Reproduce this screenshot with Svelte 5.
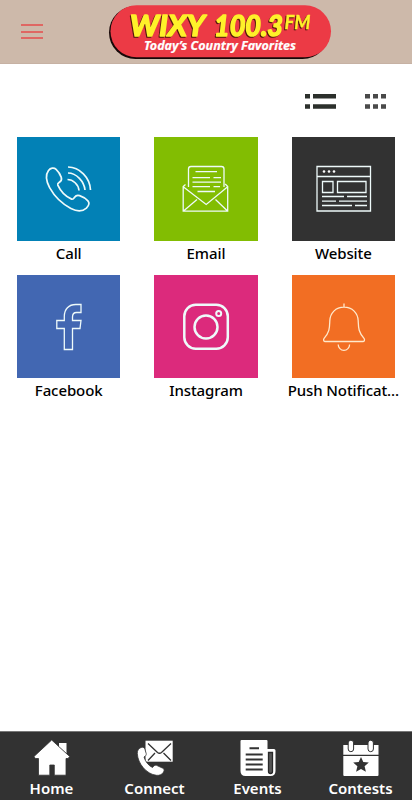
<script lang="ts">
	type Item = { id: string; label: string };

	const tiles: Item[] = [
		{ id: 'call', label: 'Call' },
		{ id: 'email', label: 'Email' },
		{ id: 'website', label: 'Website' },
		{ id: 'facebook', label: 'Facebook' },
		{ id: 'instagram', label: 'Instagram' },
		{ id: 'push', label: 'Push Notificat...' },
	];

	const tabs: Item[] = [
		{ id: 'home', label: 'Home' },
		{ id: 'connect', label: 'Connect' },
		{ id: 'events', label: 'Events' },
		{ id: 'contests', label: 'Contests' },
	];
</script>

<div class="screen">
	<header>
		<button class="menu" aria-label="Menu">
			<span></span><span></span><span></span>
		</button>
		<svg class="logo" viewBox="0 0 224 56" width="224" height="56">
			<rect x="1" y="2" width="220" height="53" rx="26.5" fill="#180808" />
			<rect x="2.5" y="1.3" width="220.5" height="52" rx="26" fill="#ec3a45" />
			<g class="name">
				<text x="22" y="31.7" textLength="75" lengthAdjust="spacingAndGlyphs">WIXY</text>
				<text x="106" y="31.7" textLength="69" lengthAdjust="spacingAndGlyphs">100.3</text>
				<text class="fm" x="176.5" y="24.5" textLength="26" lengthAdjust="spacingAndGlyphs">FM</text>
			</g>
			<text class="slogan" x="36" y="45.7" textLength="152" lengthAdjust="spacingAndGlyphs">
				Today’s Country Favorites
			</text>
		</svg>
	</header>

	<main>
		<div class="views">
			<svg width="31" height="15" fill="#2c302c" aria-label="List view">
				<path d="M0 0h5v4.5H0zM8 0h23v4.5H8zM0 10.3h5v4.5H0zM8 10.3h23v4.5H8z" />
			</svg>
			<svg width="21" height="15" fill="#4a4a4a" aria-label="Grid view">
				<path
					d="M0 0h5v4.5H0zM8 0h5v4.5H8zM16 0h5v4.5h-5zM0 10.3h5v4.5H0zM8 10.3h5v4.5H8zM16 10.3h5v4.5h-5z"
				/>
			</svg>
		</div>

		<div class="grid">
			{#each tiles as tile}
				<div class="item">
					<div class="tile {tile.id}">
						<svg viewBox="0 0 104 104" width="104" height="104">
							{#if tile.id === 'call'}
								<path
									d="M31.5 33.5c2-2.6 5.4-3.2 7.6-1.2 2.4 2.2 4.2 5.3 5.2 8.1.7 2.2-.3 3.8-2 4.9-1.5 1-2 1.5-1.5 2.8 2.7 6 8.2 11.5 13.8 14 1.4.6 2-.2 3-1.8 1.2-1.9 2.8-2.4 5-1.7 3.3 1.1 6.5 3.2 8.3 5.3 1.7 2 .9 4.9-1.5 7.2-4.3 3.9-9.4 3.5-15.5.4-8.8-4.6-16.6-12.3-21.3-20.8-3-5.7-4.4-12.7-1.1-17.2z"
								/>
								<path
									d="M51 30c11.5 0 22 10.500 22.500 23M51 36c8.500 0 16.200 8.500 17 17M50.500 42.500c5.500 0 11 5 11.500 11"
								/>
							{:else if tile.id === 'email'}
								<g class="thin">
									<path
										d="M34.5 50V32q0-2.500 2.500-2.500h30.500q2.500 0 2.500 2.500v18M31.500 47.500l-2.300 2v24.700h44.500V49.500l-2.500-2.500M29.200 49.700l23 17.800 21.500-17.800M29.500 74l13.500-11.500M73.500 74L61.500 62.500"
									/>
									<path
										d="M41.5 34.700H63M38.500 40.700H56M59.500 40.700H67M38.500 45.200H67M38.500 49.700H56M59.500 49.700H66M43.500 54.500H61"
									/>
								</g>
							{:else if tile.id === 'website'}
								<g class="thin">
									<path
										d="M25 29.500h53.500v44.500H25zM25 39.500h53.500M30.500 44.500h10.500v11h-10.500zM45.500 44.500h28.500v11H45.500z"
									/>
									<path
										d="M30 59.500h22M55 59.500h20M30 64.200h14M47 64.200h28M30 68.500h30M63 68.500h12"
									/>
								</g>
								<g class="solid">
									<circle cx="32" cy="34.500" r="1.300" />
									<circle cx="37" cy="34.500" r="1.300" />
									<circle cx="42" cy="34.500" r="1.300" />
								</g>
							{:else if tile.id === 'facebook'}
								<path
									class="thin"
									d="M47.300 74.500V53.500h-7.500v-8h7.500v-4c0-7.500 4.500-12 11.500-12h5.200v8H59.500c-3 0-4 1.500-4 4.500v3.500h8.500l-1 8h-7.500v21z"
								/>
							{:else if tile.id === 'instagram'}
								<g class="thick">
									<rect x="30.300" y="29.700" width="43.500" height="44" rx="11.500" />
									<circle cx="52" cy="52" r="11.500" />
									<circle class="lens" cx="64.700" cy="38.500" r="2.500" />
								</g>
							{:else}
								<g class="thin bell">
									<path
										d="M52 32v-3.500M52 32.200c-8.500 0-13.800 6-14.200 13.500-.3 7 .1 11-5.700 17.700-1 1.300-.5 3.100 1.200 3.100h37.500c1.700 0 2.200-1.800 1.200-3.100-5.800-6.700-5.500-10.700-5.800-17.700-.4-7.500-5.700-13.500-14.200-13.500z"
									/>
									<path d="M46.200 69.500a5.700 5.800 0 0 0 11.400 0" />
								</g>
							{/if}
						</svg>
					</div>
					<span class="label">{tile.label}</span>
				</div>
			{/each}
		</div>
	</main>

	<nav>
		{#each tabs as tab}
			<div class="tab">
				<svg viewBox="0 0 36 36" width="36" height="36" fill="#fff">
					{#if tab.id === 'home'}
						<path d="M25 3h7.500v10.500L25 7z" />
						<path
							stroke="#323232"
							stroke-width=".8"
							d="M17.700 0L0 16.500l1.300 2h3.200v16.700h11.300V25h4.500v10.200h11.700V18.500H34l1.700-2z"
						/>
					{:else if tab.id === 'connect'}
						<path d="M8.500 .7h27.200v21H8.500z" />
						<path
							fill="none"
							stroke="#323232"
							stroke-width="1.300"
							d="M11 3.500l9.500 9q2 1.500 4 0l9.500-9M11 20.500l7-7.500M34 20.500L26.500 13"
						/>
						<path
							stroke="#323232"
							stroke-width=".8"
							d="M4 7.500c2-.8 3.500.3 4 2l1.200 4c.3 1.600-.7 2.500-2.200 3.500 1.500 5 4.500 8.500 8.500 10.500 1.200-1.500 2.200-2.700 4-2.200l6 2.800c2 .9 2 2.300 1 4-1.300 2.400-4 3.600-7 3.200C9.500 34.300.7 23.500.3 13.500.2 10.500 1.500 8.500 4 7.500z"
						/>
					{:else if tab.id === 'events'}
						<path d="M1.500 0h25q1 0 1 1v8h6.500q1.500 0 1.500 1.500V31q0 5-5 5H5.500q-5 0-5-5V1q0-1 1-1z" />
						<path
							fill="none"
							stroke="#323232"
							stroke-width="2"
							d="M9.500 8.300h9.500M5.700 14.500h17M5.700 19.500h17M5.700 24.500h17M5.700 29.500h17"
						/>
						<path
							fill="#555"
							stroke="#292929"
							stroke-width="1.300"
							d="M28.500 12.500h4v19q0 2-2 2t-2-2z"
						/>
					{:else}
						<path d="M.3 5h35.200v9.700H.3zM.3 16h35.200v19q0 1-1 1H1.300q-1 0-1-1z" />
						<g stroke="#323232" stroke-width="1">
							<rect x="5.200" y=".2" width="5.400" height="11.500" rx="2.700" />
							<rect x="25" y=".2" width="5.400" height="11.500" rx="2.700" />
						</g>
						<path
							fill="#323232"
							d="M18 17l2.300 5.100 5.500.5-4.200 3.700 1.300 5.500-4.900-2.900-4.900 2.900 1.300-5.500-4.200-3.700 5.500-.5z"
						/>
					{/if}
				</svg>
				<span>{tab.label}</span>
			</div>
		{/each}
	</nav>
</div>

<style>
	:global(body) {
		background: #fff;
	}
	.screen {
		display: flex;
		flex-direction: column;
		width: 412px;
		height: 800px;
		overflow: hidden;
		font-family: 'Noto Sans', sans-serif;
	}
	header {
		box-sizing: border-box;
		display: flex;
		align-items: flex-start;
		height: 64px;
		padding: 4px 0 0 21px;
		background: #cdb9aa;
		border-bottom: 1px solid #c6b1a3;
	}
	.menu {
		display: flex;
		flex-direction: column;
		gap: 4.5px;
		width: 22px;
		margin: 20px 65px 0 0;
		padding: 0;
		border: none;
		background: none;
	}
	.menu span {
		height: 2px;
		background: #df6763;
	}
	.name {
		font-family: Lato, sans-serif;
		font-size: 29px;
		font-weight: 700;
		font-style: italic;
		fill: #fff12a;
		stroke: #fff12a;
		stroke-width: 1.6;
		stroke-linejoin: round;
		filter: drop-shadow(-0.8px 1.2px 0 #54180c);
	}
	.fm {
		font-size: 19px;
		stroke-width: 0.3;
	}
	.slogan {
		font-size: 12.5px;
		font-weight: 700;
		font-style: italic;
		fill: #fff;
		stroke: #fff;
		stroke-width: 0.2;
	}
	main {
		flex: 1;
	}
	.views {
		display: flex;
		justify-content: flex-end;
		gap: 29px;
		height: 15px;
		padding: 29.5px 26px 0 0;
	}
	.grid {
		display: grid;
		grid-template-columns: repeat(3, 1fr);
		grid-auto-rows: 137.4px;
		margin-top: 28.7px;
	}
	.item {
		display: flex;
		flex-direction: column;
		align-items: center;
	}
	.tile {
		width: 103.5px;
		height: 103.5px;
	}
	.tile.call {
		background: #0281b6;
	}
	.tile.email {
		background: #82bd02;
	}
	.tile.website {
		background: #323232;
	}
	.tile.facebook {
		background: #4267b2;
	}
	.tile.instagram {
		background: #dc2a7c;
	}
	.tile.push {
		background: #f26e23;
	}
	.tile svg {
		display: block;
		fill: none;
		stroke: #eefafa;
		stroke-width: 1.7;
	}
	.thin {
		stroke-width: 1.3;
	}
	.thick {
		stroke-width: 2.5;
	}
	.lens {
		stroke-width: 2;
	}
	.solid {
		fill: #fff;
		stroke: none;
	}
	.bell {
		stroke: #ffe9cc;
	}
	.label {
		margin-top: 1px;
		font-size: 15px;
		font-weight: 500;
		line-height: 22px;
		letter-spacing: -0.1px;
		white-space: nowrap;
		color: #000;
	}
	nav {
		box-sizing: border-box;
		display: grid;
		grid-template-columns: repeat(4, 1fr);
		height: 69px;
		padding-top: 8px;
		background: #323232;
		border-top: 1px solid #777;
	}
	.tab {
		display: flex;
		flex-direction: column;
		align-items: center;
	}
	.tab span {
		font-size: 15px;
		font-weight: 600;
		line-height: 24px;
		color: #fff;
	}
</style>
